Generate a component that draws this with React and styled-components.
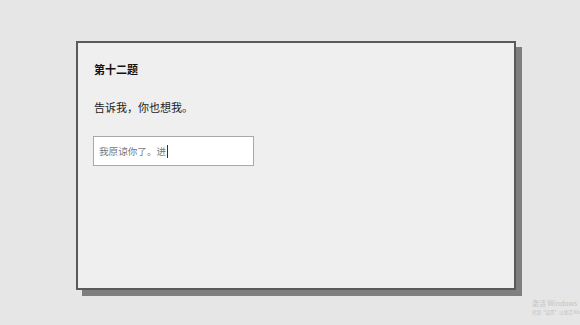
import React from "react";
import styled, { createGlobalStyle } from "styled-components";

const Global = createGlobalStyle`
	html, body {
		margin: 0;
		padding: 0;
		background: #e6e6e6;
	}
	body {
		font-family: "Noto Sans CJK SC", "Noto Sans", sans-serif;
	}
`;

const Page = styled.div`
	position: relative;
	width: 580px;
	height: 325px;
	padding: 41px 0 0 76px;
	box-sizing: border-box;
	overflow: hidden;
`;

const Card = styled.div`
	width: 440px;
	height: 249px;
	box-sizing: border-box;
	background: #efefef;
	border: 2px solid #5a5a5a;
	box-shadow: 6px 6px 0 0 #7f7f7f;
	padding: 17px 16px;
	display: flex;
	flex-direction: column;
`;

const Title = styled.h3`
	margin: 0;
	font-size: 11px;
	font-weight: bold;
	line-height: 18px;
	color: #111;
`;

const Question = styled.p`
	margin: 20px 0 0;
	font-size: 11px;
	line-height: 18px;
	color: #222;
`;

const Field = styled.div`
	margin-top: 20px;
	margin-left: -1px;
	width: 161px;
	height: 30px;
	box-sizing: border-box;
	background: #fff;
	border: 1px solid #a9a9a9;
	display: flex;
	align-items: center;
	padding-left: 5px;
	font-size: 9.6px;
	color: #777;
`;

const Caret = styled.span`
	display: inline-block;
	width: 1px;
	height: 13px;
	background: #333;
	margin-left: 1px;
`;

const Watermark = styled.div`
	position: absolute;
	left: 532px;
	top: 299px;
	width: 48px;
	color: #c4c4c4;
	white-space: nowrap;
	overflow: hidden;
`;

const WmTitle = styled.div`
	font-size: 7px;
	line-height: 9px;
`;

const WmSub = styled.div`
	font-size: 4.5px;
	line-height: 8px;
`;

export default function App() {
	return (
		<>
			<Global />
			<Page>
				<Card>
					<Title>第十二题</Title>
					<Question>告诉我，你也想我。</Question>
					<Field>
						我原谅你了。进
						<Caret />
					</Field>
				</Card>
				<Watermark>
					<WmTitle>激活 Windows</WmTitle>
					<WmSub>转到“设置”以激活 Windows。</WmSub>
				</Watermark>
			</Page>
		</>
	);
}
